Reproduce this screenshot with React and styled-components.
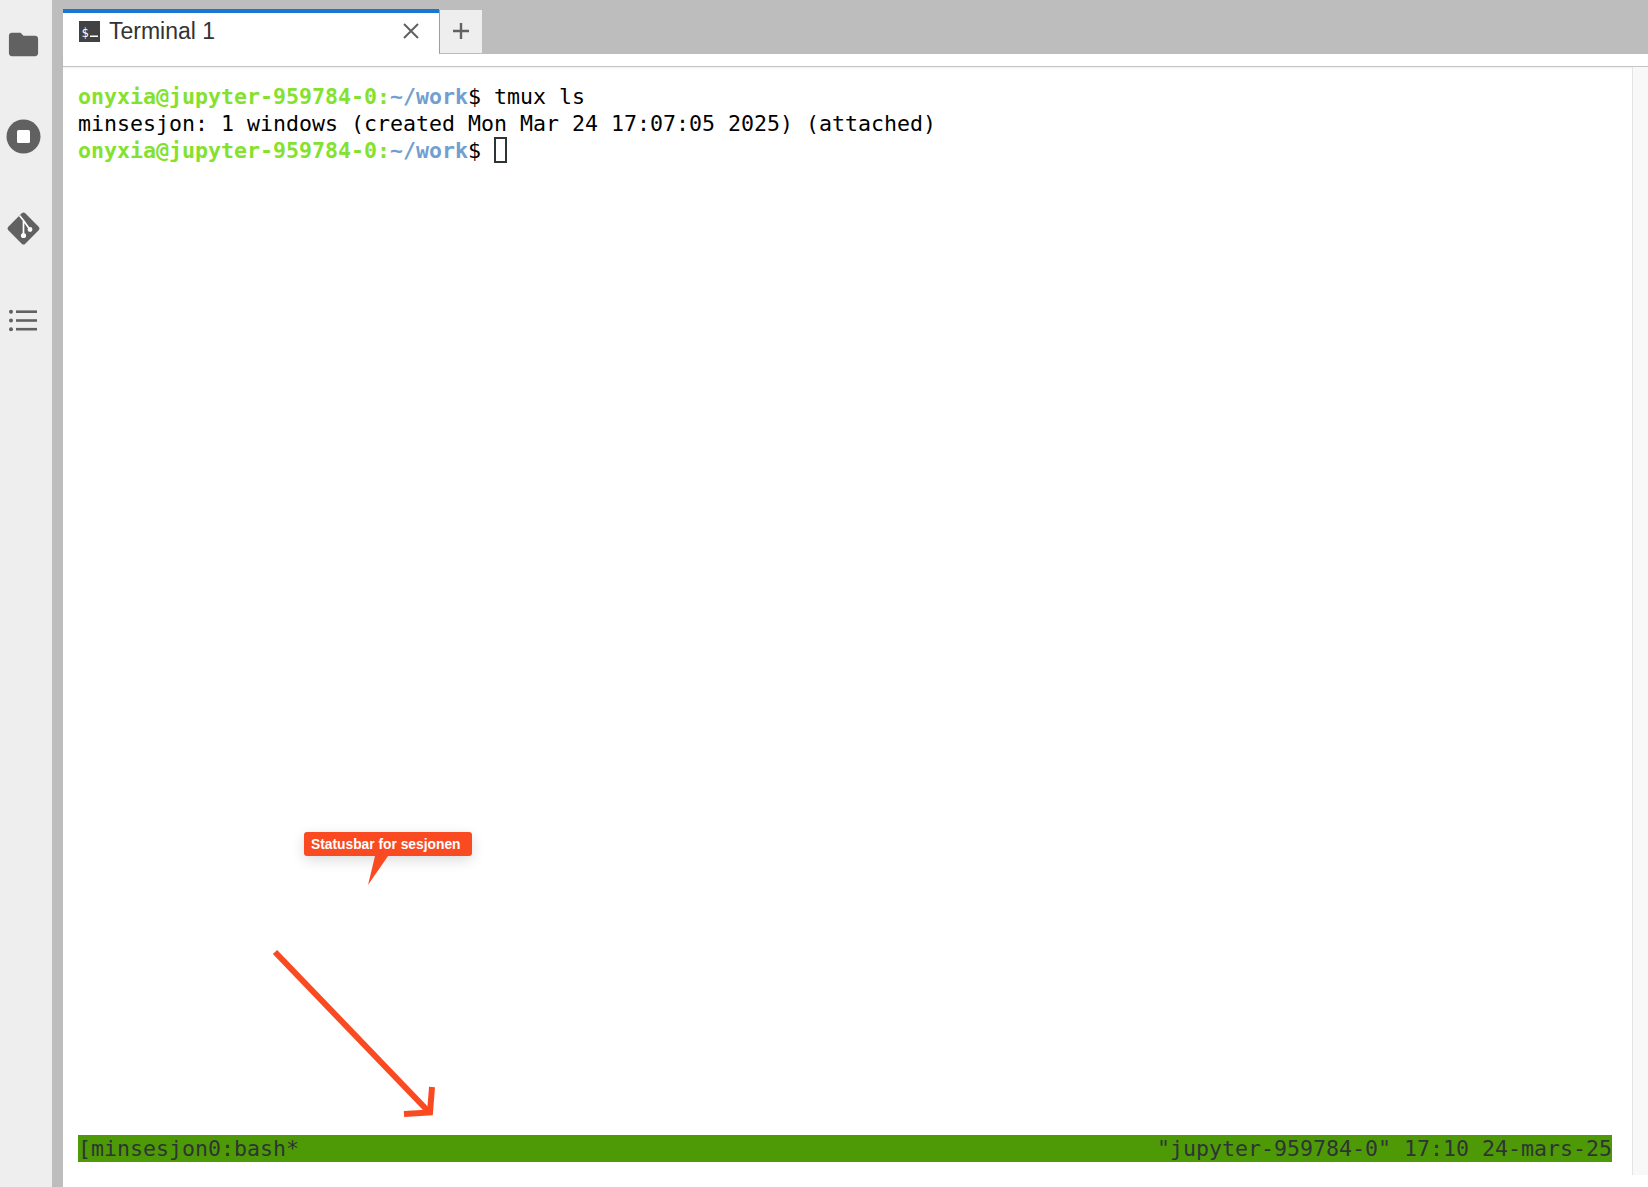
import React from 'react';
import styled, { createGlobalStyle } from 'styled-components';

const GlobalStyle = createGlobalStyle`
  html, body {
    margin: 0;
    padding: 0;
    height: 100%;
    background: #fff;
    overflow: hidden;
  }
  #root {
    height: 100%;
  }
`;

const FolderIcon = () => (
  <svg width="35" height="35" viewBox="0 0 24 24" fill="#616161">
    <path d="M10 4H4c-1.1 0-1.99.9-1.99 2L2 18c0 1.1.9 2 2 2h16c1.1 0 2-.9 2-2V8c0-1.1-.9-2-2-2h-8l-2-2z" />
  </svg>
);

const StopIcon = () => (
  <svg width="35" height="35" viewBox="0 0 35 35">
    <circle cx="17.5" cy="17.5" r="17" fill="#616161" />
    <rect x="11" y="11" width="13" height="13" rx="1.5" fill="#fff" />
  </svg>
);

const GitIcon = () => (
  <svg width="35" height="35" viewBox="0 0 35 35">
    <rect x="5.5" y="5.5" width="24" height="24" rx="2.5" fill="#616161" transform="rotate(45 17.5 17.5)" />
    <path d="M13.5 4.5l4 5M17.5 9.5v13M17.5 9.5l6 8.5" stroke="#fff" strokeWidth="1.7" fill="none" />
    <circle cx="17.5" cy="24.5" r="2.6" fill="#fff" />
    <circle cx="24" cy="18.5" r="2.4" fill="#fff" />
  </svg>
);

const ListIcon = () => (
  <svg width="35" height="35" viewBox="0 0 35 35" fill="#616161">
    <circle cx="5" cy="8.7" r="2" />
    <circle cx="5" cy="17.5" r="2" />
    <circle cx="5" cy="26.2" r="2" />
    <rect x="10" y="7.4" width="21" height="2.6" />
    <rect x="10" y="16.2" width="21" height="2.6" />
    <rect x="10" y="24.9" width="21" height="2.6" />
  </svg>
);

const TerminalIcon = () => (
  <svg width="21" height="21" viewBox="0 0 21 21">
    <rect width="21" height="21" fill="#424242" />
    <text x="2.500" y="15.500" fontFamily="'DejaVu Sans Mono', monospace" fontSize="12" fill="#fff">$</text>
    <rect x="11" y="14.5" width="8" height="1.5" fill="#fff" />
  </svg>
);

const App = () => {
  return (
    <Page>
      <GlobalStyle />
      <Sidebar>
        <FolderIcon />
        <StopIcon />
        <GitIcon />
        <ListIcon />
      </Sidebar>
      <Divider />
      <Main>
        <TabBar>
          <Tab>
            <TerminalIcon />
            <TabLabel>Terminal 1</TabLabel>
            <CloseIcon width="16" height="16" viewBox="0 0 16 16">
              <path d="M1 1l14 14M15 1L1 15" stroke="#616161" strokeWidth="2" fill="none" />
            </CloseIcon>
          </Tab>
          <AddButton>
            <svg width="18" height="18" viewBox="0 0 18 18">
              <path d="M9 1v16M1 9h16" stroke="#616161" strokeWidth="2.400" fill="none" />
            </svg>
          </AddButton>
        </TabBar>
        <TabSpacer />
        <Content>
          <Terminal>
            <Output>
              <Line>
                <Host>onyxia@jupyter-959784-0:</Host>
                <Path>~/work</Path>$ tmux ls
              </Line>
              <Line>minsesjon: 1 windows (created Mon Mar 24 17:07:05 2025) (attached)</Line>
              <Line>
                <Host>onyxia@jupyter-959784-0:</Host>
                <Path>~/work</Path>$ <Cursor />
              </Line>
            </Output>
            <StatusBar>
              <span>[minsesjon0:bash*</span>
              <span>"jupyter-959784-0" 17:10 24-mars-25</span>
            </StatusBar>
          </Terminal>
          <Scrollbar />
        </Content>
        <Callout>
          Statusbar for sesjonen
          <CalloutTail width="22" height="30" viewBox="0 0 22 30">
            <path d="M9 0L22 0L2 29z" fill="#f94a22" />
          </CalloutTail>
        </Callout>
        <Arrow width="170" height="170" viewBox="0 0 170 170">
          <path d="M4 4L157 163" stroke="#f94a22" strokeWidth="6" fill="none" />
          <path d="M133 166L159 164.500L161 139" stroke="#f94a22" strokeWidth="6" fill="none" />
        </Arrow>
      </Main>
    </Page>
  );
};

const Page = styled.div`
  display: flex;
  height: 100vh;
  background: #fff;
`;

const Sidebar = styled.div`
  width: 47px;
  padding: 27px 5px 0 0;
  background: #eeeeee;
  display: flex;
  flex-direction: column;
  align-items: center;
  gap: 57px;
`;

const Divider = styled.div`
  width: 11px;
  background: #bdbdbd;
`;

const Main = styled.div`
  position: relative;
  flex: 1;
  min-width: 0;
  display: flex;
  flex-direction: column;
`;

const TabBar = styled.div`
  height: 45px;
  padding-top: 9px;
  background: #bdbdbd;
  display: flex;
  align-items: flex-start;
`;

const Tab = styled.div`
  box-sizing: border-box;
  width: 376px;
  height: 45px;
  padding: 8px 20px 0 16px;
  background: #fff;
  border-top: 4px solid #1976d2;
  display: flex;
  align-items: flex-start;
`;

const TabLabel = styled.span`
  flex: 1;
  margin-left: 9px;
  font: 23px/20px "Liberation Sans", Arial, sans-serif;
  color: #333333;
`;

const CloseIcon = styled.svg`
  margin-top: 2px;
`;

const AddButton = styled.div`
  box-sizing: border-box;
  width: 43px;
  height: 44px;
  margin-top: 1px;
  padding-bottom: 2px;
  background: #eeeeee;
  border-left: 1px solid #9e9e9e;
  border-bottom: 1px solid #bdbdbd;
  display: flex;
  align-items: center;
  justify-content: center;
`;

const TabSpacer = styled.div`
  height: 12px;
  border-bottom: 1px solid #c4c4c4;
  box-shadow: 0 1px 2px rgba(0, 0, 0, 0.08);
  background: #fff;
`;

const Content = styled.div`
  flex: 1;
  min-height: 0;
  display: flex;
  padding-bottom: 12px;
`;

const Terminal = styled.div`
  flex: 1;
  min-width: 0;
  padding: 16px 20px 13px 15px;
  display: flex;
  flex-direction: column;
  justify-content: space-between;
  font: 21.6px/27px "DejaVu Sans Mono", monospace;
  color: #000;
`;

const Output = styled.div`
  display: flex;
  flex-direction: column;
`;

const Line = styled.div`
  white-space: pre;
  height: 27px;
`;

const Host = styled.span`
  color: #84e22e;
  font-weight: 700;
`;

const Path = styled.span`
  color: #729fcf;
  font-weight: 700;
`;

const Cursor = styled.span`
  display: inline-block;
  box-sizing: border-box;
  width: 13px;
  height: 26px;
  border: 2px solid #2e3436;
  vertical-align: top;
`;

const StatusBar = styled.div`
  height: 27px;
  background: #4e9a06;
  color: #2e3436;
  display: flex;
  justify-content: space-between;
  white-space: pre;
`;

const Scrollbar = styled.div`
  width: 15px;
  background: #f8f8f8;
  border-left: 1px solid #e4e4e4;
`;

const Callout = styled.div`
  position: absolute;
  left: 241px;
  top: 832px;
  box-sizing: border-box;
  width: 168px;
  height: 24px;
  padding-left: 7px;
  border-radius: 3px;
  background: #f94a22;
  box-shadow: 0 4px 14px rgba(0, 0, 0, 0.14);
  color: #fff;
  font: 700 13.8px/25px "Liberation Sans", Arial, sans-serif;
`;

const CalloutTail = styled.svg`
  position: absolute;
  left: 62px;
  top: 24px;
`;

const Arrow = styled.svg`
  position: absolute;
  left: 208px;
  top: 948px;
`;

export default App;
